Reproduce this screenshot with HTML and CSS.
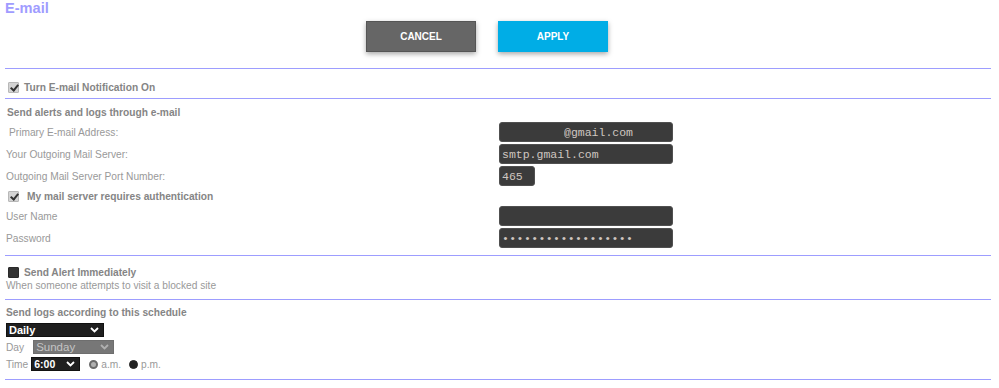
FILE: index.html
```html
<!DOCTYPE html>
<html lang="en">
<head>
  <meta charset="UTF-8" />
  <title>E-mail</title>
  <link rel="stylesheet" href="styles.css">
</head>
<body>
  <div class="page">
    <h1 class="title">E-mail</h1>
    <div class="actions">
      <button class="btn btn-cancel">CANCEL</button>
      <button class="btn btn-apply">APPLY</button>
    </div>

    <section class="block block-toggle">
      <label class="check-line strong">
        <input type="checkbox" class="check" checked>
        <span>Turn E-mail Notification On</span>
      </label>
    </section>

    <section class="block block-mail">
      <div class="heading">Send alerts and logs through e-mail</div>
      <div class="row">
        <span class="label label-indent">Primary E-mail Address:</span>
        <input type="text" class="field field-email" value="@gmail.com">
      </div>
      <div class="row">
        <span class="label">Your Outgoing Mail Server:</span>
        <input type="text" class="field" value="smtp.gmail.com">
      </div>
      <div class="row">
        <span class="label">Outgoing Mail Server Port Number:</span>
        <input type="text" class="field field-port" value="465">
      </div>
      <div class="row row-check">
        <label class="check-line strong auth">
          <input type="checkbox" class="check" checked>
          <span>My mail server requires authentication</span>
        </label>
      </div>
      <div class="row">
        <span class="label">User Name</span>
        <input type="text" class="field" value="">
      </div>
      <div class="row">
        <span class="label">Password</span>
        <input type="password" class="field field-pass" value="xxxxxxxxxxxxxxxxxx">
      </div>
    </section>

    <section class="block block-alert">
      <label class="check-line strong">
        <input type="checkbox" class="check check-dark">
        <span>Send Alert Immediately</span>
      </label>
      <div class="note">When someone attempts to visit a blocked site</div>
    </section>

    <section class="block block-schedule">
      <div class="heading heading-sched">Send logs according to this schedule</div>
      <div class="sched-row">
        <span class="select-wrap">
          <select class="select select-freq">
            <option>Daily</option>
            <option>Weekly</option>
          </select>
          <svg class="chevron" width="9" height="6" viewBox="0 0 9 6"><path d="M1 1l3.5 3.5L8 1" fill="none" stroke="#fff" stroke-width="1.8"/></svg>
        </span>
      </div>
      <div class="sched-row">
        <span class="small-label label-day">Day</span>
        <span class="select-wrap">
          <select class="select select-day">
            <option>Sunday</option>
          </select>
          <svg class="chevron" width="9" height="6" viewBox="0 0 9 6"><path d="M1 1l3.5 3.5L8 1" fill="none" stroke="#b0b0b0" stroke-width="1.8"/></svg>
        </span>
      </div>
      <div class="sched-row">
        <span class="small-label label-time">Time</span>
        <span class="select-wrap">
          <select class="select select-time">
            <option>6:00</option>
          </select>
          <svg class="chevron" width="9" height="6" viewBox="0 0 9 6"><path d="M1 1l3.5 3.5L8 1" fill="none" stroke="#fff" stroke-width="1.8"/></svg>
        </span>
        <label class="radio-line"><input type="radio" name="ampm" class="radio radio-am"><span>a.m.</span></label>
        <label class="radio-line"><input type="radio" name="ampm" class="radio radio-pm" checked><span>p.m.</span></label>
      </div>
    </section>
  </div>
</body>
</html>
```

FILE: styles.css
```css
* { box-sizing: border-box; }

body {
  margin: 0;
  background: #fff;
  font-family: "Liberation Sans", Arial, sans-serif;
  font-size: 10.2px;
  color: #999;
}

.page {
  margin: 0 8px 0 5px;
}

.title {
  margin: 0;
  font-size: 14.6px;
  line-height: 17px;
  font-weight: bold;
  color: #a09cff;
}

.actions {
  display: flex;
  justify-content: center;
  gap: 22px;
  padding: 4px 22px 16px 0;
}

.btn {
  width: 110px;
  height: 31px;
  border: none;
  font-family: "Liberation Sans", Arial, sans-serif;
  font-size: 10px;
  font-weight: bold;
  color: #fff;
  box-shadow: 0 2px 5px rgba(0, 0, 0, 0.35);
  cursor: pointer;
}

.btn-cancel {
  background: #666;
  border: 1px solid #555;
}

.btn-apply {
  background: #00ade6;
}

.block {
  border-top: 1px solid #9d9dff;
}

.block-schedule {
  border-bottom: 1px solid #9d9dff;
}

.strong {
  font-weight: bold;
  color: #858585;
}

.check-line {
  display: flex;
  align-items: center;
  gap: 5px;
  height: 14px;
  padding-left: 3px;
}

.check {
  appearance: none;
  -webkit-appearance: none;
  position: relative;
  margin: 0;
  width: 11px;
  height: 11px;
  background: #d4d4d4;
  border: 1px solid #b8b8b8;
  border-radius: 1px;
}

.check:checked::after {
  content: "";
  position: absolute;
  left: 3px;
  top: 0;
  width: 3px;
  height: 6px;
  border-right: 2px solid #333;
  border-bottom: 2px solid #333;
  transform: rotate(40deg);
}

.check-dark {
  background: #333;
  border-color: #2a2a2a;
}

.block-toggle {
  padding: 11px 0 4px;
}

.block-mail {
  padding: 7px 0 7px;
}

.heading {
  height: 14px;
  line-height: 14px;
  padding-left: 2px;
  font-weight: bold;
  color: #858585;
}

.row {
  display: grid;
  grid-template-columns: 494px 1fr;
  align-items: center;
  height: 20px;
  margin-top: 2px;
}

.row:first-of-type {
  margin-top: 1px;
}

.row-check {
  height: 16px;
}

.auth {
  gap: 8px;
}

.label {
  padding-left: 1px;
}

.label-indent {
  padding-left: 4px;
}

.field {
  width: 174px;
  height: 20px;
  padding: 0 2px;
  background: #3b3b3b;
  border: 1px solid #505050;
  border-radius: 3px;
  font-family: "Liberation Mono", "Courier New", monospace;
  font-size: 11.5px;
  color: #cfc6c0;
  outline: none;
}

.field-email {
  padding-left: 64px;
}

.field-port {
  width: 36px;
}

.field-pass {
  letter-spacing: 0.4px;
}

.block-alert {
  padding: 9px 0 6px;
}

.note {
  height: 14px;
  line-height: 14px;
  padding-left: 1px;
}

.block-schedule {
  padding: 6px 0 8px;
}

.heading-sched {
  padding-left: 1px;
}

.sched-row {
  display: flex;
  align-items: center;
  margin-top: 3px;
  padding-left: 1px;
}

.sched-row:first-of-type {
  margin-top: 1px;
}

.label-day {
  margin-right: 9px;
}

.label-time {
  margin-right: 3px;
}

.select-wrap {
  position: relative;
  display: inline-block;
  height: 14px;
}

.select {
  appearance: none;
  -webkit-appearance: none;
  display: block;
  height: 14px;
  margin: 0;
  padding: 0 0 0 2px;
  border: 1px solid #111;
  border-radius: 0;
  background: #1f1f1f;
  font-family: "Liberation Sans", Arial, sans-serif;
  font-size: 11px;
  line-height: 12px;
  font-weight: bold;
  color: #fff;
}

.select-freq {
  width: 98px;
}

.select-day {
  width: 81px;
  background: #777;
  border-color: #6e6e6e;
  font-weight: normal;
  font-size: 11.5px;
  color: #c4c4c4;
}

.select-time {
  width: 49px;
  font-size: 10.5px;
}

.chevron {
  position: absolute;
  right: 5px;
  top: 4px;
  pointer-events: none;
}

.radio-line {
  display: flex;
  align-items: center;
  gap: 3px;
  margin-left: 9px;
}

.radio-line + .radio-line {
  margin-left: 8px;
}

.radio {
  appearance: none;
  -webkit-appearance: none;
  margin: 0;
  width: 9px;
  height: 9px;
  border-radius: 50%;
}

.radio-am {
  background: #b0b0b0;
  border: 2px solid #6a6a6a;
}

.radio-pm {
  background: #222;
  border: 1px solid #222;
}
```
